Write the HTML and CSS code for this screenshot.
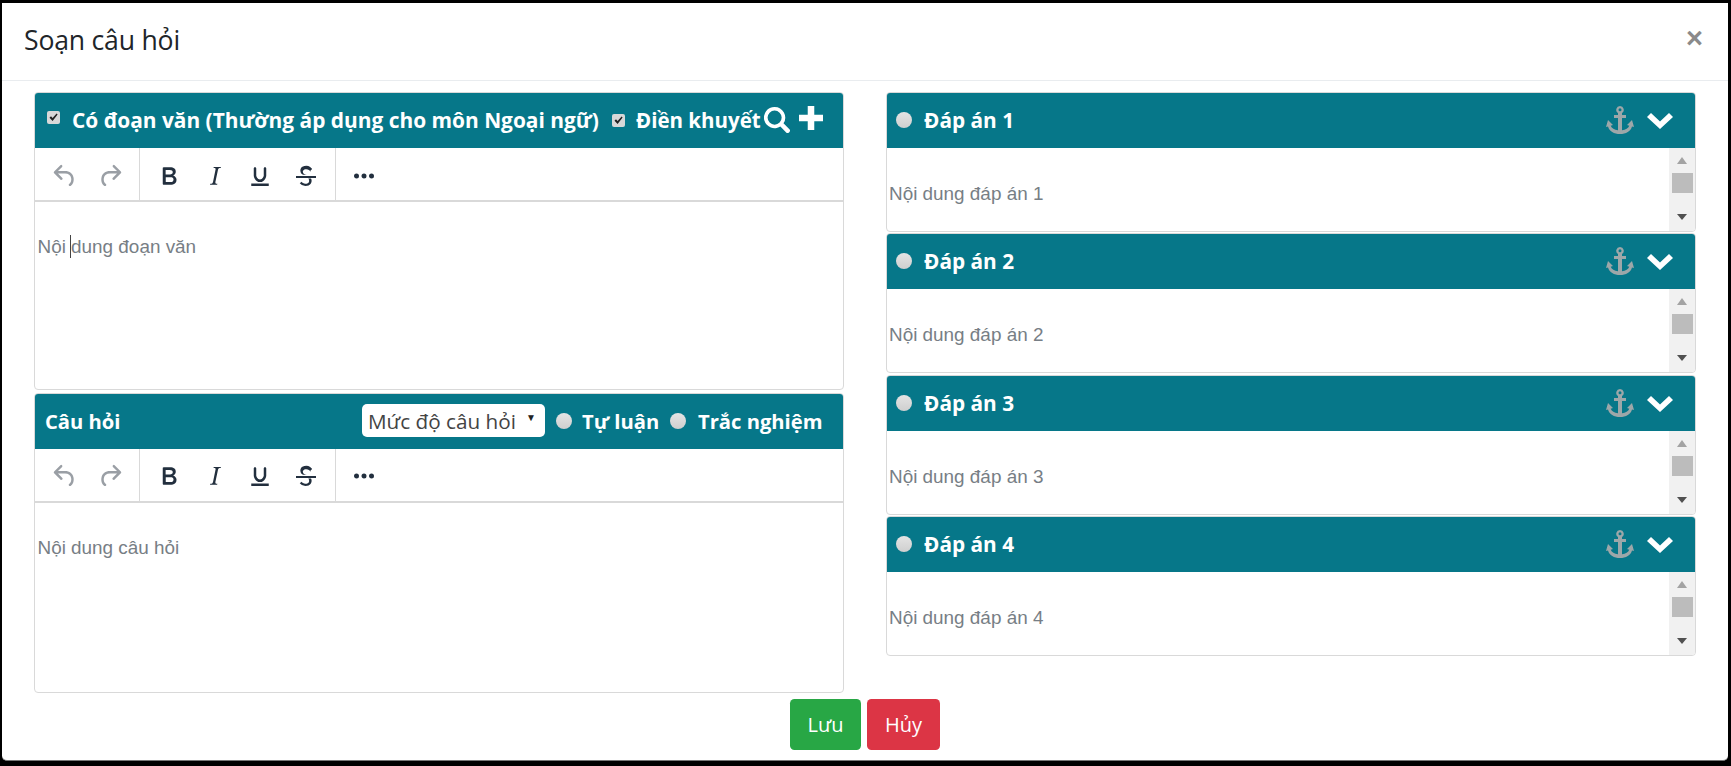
FILE: index.html
```html
<!DOCTYPE html>
<html lang="vi">
<head>
<meta charset="utf-8">
<title>Soạn câu hỏi</title>
<link rel="stylesheet" href="styles.css">
</head>
<body>
<svg class="defs" width="0" height="0" aria-hidden="true">
  <symbol id="i-undo" viewBox="0 0 24 24"><path d="M6.4 8H12c3.7 0 6.2 2 6.8 5.1.6 2.7-.4 5.6-2.3 6.8a1 1 0 0 1-1-1.8c1.1-.6 1.8-2.7 1.4-4.6-.5-2.1-2.1-3.5-4.9-3.5H6.4l3.3 3.3a1 1 0 1 1-1.4 1.4l-5-5a1 1 0 0 1 0-1.4l5-5a1 1 0 0 1 1.4 1.4L6.4 8z"/></symbol>
  <symbol id="i-redo" viewBox="0 0 24 24"><path d="M17.6 8H12c-3.7 0-6.2 2-6.8 5.100-.6 2.700.4 5.600 2.300 6.800a1 1 0 0 0 1-1.800c-1.100-.6-1.800-2.700-1.400-4.600.5-2.100 2.100-3.500 4.900-3.500h5.600l-3.300 3.300a1 1 0 1 0 1.400 1.400l5-5a1 1 0 0 0 0-1.400l-5-5a1 1 0 0 0-1.400 1.400L17.600 8z"/></symbol>
  <symbol id="i-bold" viewBox="0 0 24 24"><path d="M7.8 19c-.3 0-.5 0-.6-.2l-.2-.5V5.700c0-.2 0-.4.2-.5l.6-.2h5c1.500 0 2.700.3 3.500 1 .7.6 1.100 1.400 1.100 2.500a3 3 0 0 1-.6 1.900c-.4.6-1 1-1.600 1.200.4.1.9.3 1.300.6s.8.7 1 1.200c.4.4.5 1 .5 1.600 0 1.300-.4 2.300-1.300 3-.8.7-2.100 1-3.800 1H7.800zm5-8.300c.6 0 1.200-.1 1.600-.5.4-.3.6-.7.6-1.300 0-1.100-.8-1.700-2.300-1.700H9.300v3.500h3.400zm.5 6c.7 0 1.300-.1 1.700-.4.4-.4.6-.9.6-1.500s-.2-1-.7-1.400c-.4-.3-1-.4-2-.4H9.400v3.800h4z"/></symbol>
  <symbol id="i-italic" viewBox="0 0 24 24"><path d="M16.700 4.700l-.1.9h-.3c-.6 0-1 0-1.400.3-.3.3-.4.6-.5 1.100l-2.100 9.800v.6c0 .5.4.8 1.400.8h.2l-.2.8H8l.2-.8h.2c1.100 0 1.800-.5 2-1.500l2-9.800.1-.5c0-.6-.4-.8-1.400-.8h-.3l.2-.9h5.800z"/></symbol>
  <symbol id="i-underline" viewBox="0 0 24 24"><path d="M16 5c.6 0 1 .4 1 1v5.500a4 4 0 0 1-.4 1.800l-.5 1a4.600 4.600 0 0 1-8.200 0l-.5-1a4 4 0 0 1-.4-1.800V6c0-.6.4-1 1-1s1 .4 1 1v5.500c0 .3 0 .6.2.9l.5 1a2.600 2.600 0 0 0 4.600 0l.5-1c.2-.3.2-.6.2-.9V6c0-.6.4-1 1-1zM5 18h14v2H5z"/></symbol>
  <symbol id="i-strike" viewBox="0 0 24 24"><path d="M15.600 8.500c-.5-.7-1-1.100-1.300-1.300-.6-.4-1.300-.6-2-.6-2.700 0-2.800 1.700-2.800 2.100 0 1.600 1.800 2 3.200 2.300h-3c-1-.5-2.200-1.500-2.200-3.300 0-.7.2-3.900 4.800-3.900 1.100 0 2.100.3 3 .9.6.4 1.200 1 1.700 1.700l-1.400 1.100zM16 14c.3.5.5 1.100.5 1.800 0 1.400-.7 4.200-5 4.200A6.200 6.200 0 0 1 7 17.700l1.500-1.100c.4.6 1.600 1.600 3 1.600 2.700 0 3-1.500 3-2.400 0-.7-.2-1.300-.7-1.800H16zM4 12h16v1.500H4z"/></symbol>
  <symbol id="i-more" viewBox="0 0 24 24"><path d="M6 10a2 2 0 0 0-2 2c0 1.100.9 2 2 2a2 2 0 0 0 2-2 2 2 0 0 0-2-2zm12 0a2 2 0 0 0-2 2c0 1.100.9 2 2 2a2 2 0 0 0 2-2 2 2 0 0 0-2-2zm-6 0a2 2 0 0 0-2 2c0 1.100.9 2 2 2a2 2 0 0 0 2-2 2 2 0 0 0-2-2z"/></symbol>
  <symbol id="i-check" viewBox="0 0 13 13"><path d="M2.500 6.800 4 5.300l1.600 1.800L9.600 2.400l1 1-5 6.600z"/></symbol>
  <symbol id="i-anchor" viewBox="0 0 28 28"><path d="M14 0a3.800 3.800 0 0 0-2 7v2H8v3h4v12.300c-3.600-.4-6.300-2.300-7.300-4.600l2.300-.7-5-5-2 7 2-.6C3.300 25 8 28 14 28s10.700-3 12-7.600l2 .6-2-7-5 5 2.300.7c-1 2.300-3.700 4.200-7.300 4.600V12h4V9h-4V7a3.800 3.800 0 0 0-2-7zm0 2.300a1.500 1.500 0 1 1 0 3 1.500 1.500 0 0 1 0-3z"/></symbol>
  <symbol id="i-chevron" viewBox="0 0 26 16"><path d="M13 16 0 4 4 0 13 8.500 22 0 26 4z"/></symbol>
  <symbol id="i-search" viewBox="0 0 24 24"><path d="M9.800 0a9.800 9.800 0 1 0 5.300 18l5.600 5.700a2.200 2.200 0 0 0 3-3L18 15.100A9.800 9.800 0 0 0 9.800 0zm0 3.300a6.500 6.500 0 1 1 0 13 6.500 6.500 0 0 1 0-13z"/></symbol>
  <symbol id="i-plus" viewBox="0 0 22 22"><path d="M8 0h6v8h8v6h-8v8H8v-8H0V8h8z"/></symbol>
</svg>

<main class="modal">
  <header class="modal-head">
    <h1 class="modal-title">Soạn câu hỏi</h1>
    <span class="close">×</span>
  </header>
  <div class="modal-body">
    <div class="col">
      <section class="panel panel-a">
        <div class="bar bar-a">
          <span class="chk chk-a"><svg><use href="#i-check"/></svg></span>
          <span class="lbl lbl-a">Có đoạn văn (Thường áp dụng cho môn Ngoại ngữ)</span>
          <span class="chk chk-b"><svg><use href="#i-check"/></svg></span>
          <span class="lbl lbl-b">Điền khuyết</span>
          <svg class="ic-search"><use href="#i-search"/></svg>
          <svg class="ic-plus"><use href="#i-plus"/></svg>
        </div>
        <div class="toolbar">
          <div class="tgroup tgroup-hist">
            <svg class="tool off"><use href="#i-undo"/></svg>
            <svg class="tool off"><use href="#i-redo"/></svg>
          </div>
          <div class="tgroup tgroup-fmt">
            <svg class="tool"><use href="#i-bold"/></svg>
            <svg class="tool"><use href="#i-italic"/></svg>
            <svg class="tool"><use href="#i-underline"/></svg>
            <svg class="tool"><use href="#i-strike"/></svg>
          </div>
          <div class="tgroup tgroup-more">
            <svg class="tool"><use href="#i-more"/></svg>
          </div>
        </div>
        <div class="editor"><span class="ph ph-caret"><span>Nội </span><span class="caret"></span><span>dung đoạn văn</span></span></div>
      </section>
      <section class="panel panel-b">
        <div class="bar bar-b">
          <span class="lbl lbl-q">Câu hỏi</span>
          <span class="select">Mức độ câu hỏi<i class="sel-arrow">▼</i></span>
          <span class="radio"></span>
          <span class="lbl lbl-t">Tự luận</span>
          <span class="radio radio-2"></span>
          <span class="lbl">Trắc nghiệm</span>
        </div>
        <div class="toolbar">
          <div class="tgroup tgroup-hist">
            <svg class="tool off"><use href="#i-undo"/></svg>
            <svg class="tool off"><use href="#i-redo"/></svg>
          </div>
          <div class="tgroup tgroup-fmt">
            <svg class="tool"><use href="#i-bold"/></svg>
            <svg class="tool"><use href="#i-italic"/></svg>
            <svg class="tool"><use href="#i-underline"/></svg>
            <svg class="tool"><use href="#i-strike"/></svg>
          </div>
          <div class="tgroup tgroup-more">
            <svg class="tool"><use href="#i-more"/></svg>
          </div>
        </div>
        <div class="editor"><span class="ph">Nội dung câu hỏi</span></div>
      </section>
    </div>
    <div class="col col-right">
      <section class="panel answer">
        <div class="bar bar-ans"><span class="radio radio-ans"></span><span class="lbl">Đáp án 1</span><svg class="ic-anchor"><use href="#i-anchor"/></svg><svg class="ic-chevron"><use href="#i-chevron"/></svg></div>
        <div class="ans-body"><span class="ph ph-ans">Nội dung đáp án 1</span><div class="sbar"><i class="arr arr-up"></i><i class="thumb"></i><i class="arr arr-down"></i></div></div>
      </section>
      <section class="panel answer">
        <div class="bar bar-ans"><span class="radio radio-ans"></span><span class="lbl">Đáp án 2</span><svg class="ic-anchor"><use href="#i-anchor"/></svg><svg class="ic-chevron"><use href="#i-chevron"/></svg></div>
        <div class="ans-body"><span class="ph ph-ans">Nội dung đáp án 2</span><div class="sbar"><i class="arr arr-up"></i><i class="thumb"></i><i class="arr arr-down"></i></div></div>
      </section>
      <section class="panel answer">
        <div class="bar bar-ans"><span class="radio radio-ans"></span><span class="lbl">Đáp án 3</span><svg class="ic-anchor"><use href="#i-anchor"/></svg><svg class="ic-chevron"><use href="#i-chevron"/></svg></div>
        <div class="ans-body"><span class="ph ph-ans">Nội dung đáp án 3</span><div class="sbar"><i class="arr arr-up"></i><i class="thumb"></i><i class="arr arr-down"></i></div></div>
      </section>
      <section class="panel answer">
        <div class="bar bar-ans"><span class="radio radio-ans"></span><span class="lbl">Đáp án 4</span><svg class="ic-anchor"><use href="#i-anchor"/></svg><svg class="ic-chevron"><use href="#i-chevron"/></svg></div>
        <div class="ans-body"><span class="ph ph-ans">Nội dung đáp án 4</span><div class="sbar"><i class="arr arr-up"></i><i class="thumb"></i><i class="arr arr-down"></i></div></div>
      </section>
    </div>
  </div>
  <footer class="modal-foot">
    <button class="btn btn-save">Lưu</button>
    <button class="btn btn-cancel">Hủy</button>
  </footer>
</main>
</body>
</html>
```
FILE: styles.css
```css
* { box-sizing: border-box; }
html, body { margin: 0; height: 100%; }
body { background: #000; overflow: hidden; font-family: "Open Sans", "Noto Sans", sans-serif; color: #212529; padding: 3px 3px 5px 2px; }
.defs { position: absolute; }
.modal { height: 758px; background: #fff; border-radius: 0 0 5px 5px; border-bottom: 1px solid #777; }
.modal-head { height: 78px; border-bottom: 1px solid #e9ecef; display: flex; align-items: center; justify-content: space-between; padding: 0 25px 3px 22px; }
.modal-title { margin: 0; font-size: 26.600px; font-weight: 400; letter-spacing: -0.2px; color: #212529; }
.close { font-family: "Liberation Sans", sans-serif; font-size: 29px; font-weight: 700; color: #8a8a8a; line-height: 1; margin-top: -3px; }
.modal-body { display: grid; grid-template-columns: 810px 810px; column-gap: 42px; padding: 11px 0 0 32px; }
.col { display: flex; flex-direction: column; gap: 2.500px; }
.col-right { gap: 1.400px; }
.panel { border: 1px solid #d9d9d9; border-radius: 4px; background: #fff; display: flex; flex-direction: column; overflow: hidden; }
.panel-a { height: 298px; }
.panel-b { height: 300px; }
.answer { height: 140px; }
.bar { background: #067789; color: #fff; height: 56px; flex: none; display: flex; align-items: center; font-weight: 700; font-size: 20.800px; margin: -1px -1px 0; }
.lbl { white-space: nowrap; }
.bar-a { padding-left: 13px; font-size: 20.900px; }
.chk { width: 13px; height: 13px; border-radius: 2px; background: #d8d8d8; display: block; flex: none; }
.chk svg { width: 13px; height: 13px; display: block; fill: #222; }
.chk-a { margin-top: -5px; }
.chk-b { margin: 0 11px 0 14px; }
.lbl-a { margin-left: 12px; width: 526px; }
.lbl-b { width: 124px; font-size: 20.500px; }
.ic-search { width: 26px; height: 26px; fill: #fff; margin-left: 4px; flex: none; }
.ic-plus { width: 24px; height: 24px; fill: #fff; margin: -5px 0 0 9px; flex: none; }
.bar-b { padding-left: 11px; font-size: 20.200px; }
.lbl-q { width: 317px; }
.select { width: 183px; height: 33px; background: #fff; color: #444; border-radius: 5px; font-weight: 400; font-size: 20.700px; padding-left: 6px; display: flex; align-items: center; white-space: nowrap; }
.sel-arrow { font-style: normal; font-size: 10px; margin-left: 10px; color: #222; margin-top: -7px; }
.radio { width: 16px; height: 16px; border-radius: 50%; background: linear-gradient(#e4e4e4, #cfcfcf); flex: none; margin: 0 10px 0 11px; }
.radio-2 { margin: 0 12px 0 10px; }
.lbl-t { width: 78px; }
.toolbar { height: 54px; flex: none; display: flex; border-bottom: 2px solid #d9d9d9; }
.tgroup { display: flex; align-items: center; height: 100%; padding-top: 3px; border-right: 1px solid #d9d9d9; }
.tgroup-hist { width: 105px; padding-left: 15px; gap: 15px; }
.tgroup-fmt { width: 196px; padding-left: 14px; gap: 15.500px; }
.tgroup-more { border: 0; padding-left: 13px; }
.tool { width: 30px; height: 30px; fill: #222f3e; flex: none; }
.tool.off { fill: #9a9fa5; }
.editor { flex: 1; padding: 32px 2.500px 0; }
.panel-b .editor { padding-top: 33px; }
.ph { font-family: "Liberation Sans", sans-serif; font-size: 18.900px; color: #777e85; white-space: nowrap; line-height: 24px; display: block; }
.ph-caret { display: flex; white-space: pre; margin-top: 1px; }
.caret { width: 1px; height: 23px; background: #444; margin-left: -1px; }
.bar-ans { padding: 0 23px 0 10px; }
.radio-ans { margin: 0 12px 0 0; }
.bar-ans .lbl { flex: 1; }
.ic-anchor { width: 28px; height: 28px; fill: #9da7a9; flex: none; margin-right: 13px; }
.ic-chevron { width: 26px; height: 16px; fill: #fff; flex: none; margin-top: 2px; }
.ans-body { flex: 1; display: flex; align-items: stretch; min-height: 0; }
.ph-ans { flex: 1; padding: 34px 0 0 2px; }
.sbar { width: 26px; background: #f1f1f1; display: flex; flex-direction: column; align-items: center; flex: none; }
.thumb { width: 21px; height: 20px; background: #bcbcbc; margin-top: 9px; display: block; }
.arr { width: 0; height: 0; border-left: 5px solid transparent; border-right: 5px solid transparent; display: block; }
.arr-up { border-bottom: 7px solid #a3a3a3; margin-top: 9px; }
.arr-down { border-top: 6px solid #505050; margin-top: 21px; }
.modal-foot { display: flex; justify-content: center; gap: 6px; margin-top: 6px; }
.btn { height: 51px; border: 0; border-radius: 4.500px; color: #fff; font-family: "Open Sans", sans-serif; font-size: 20px; padding: 0; }
.btn-save { width: 71px; background: #28a745; }
.btn-cancel { width: 73px; background: #dc3545; }
```
